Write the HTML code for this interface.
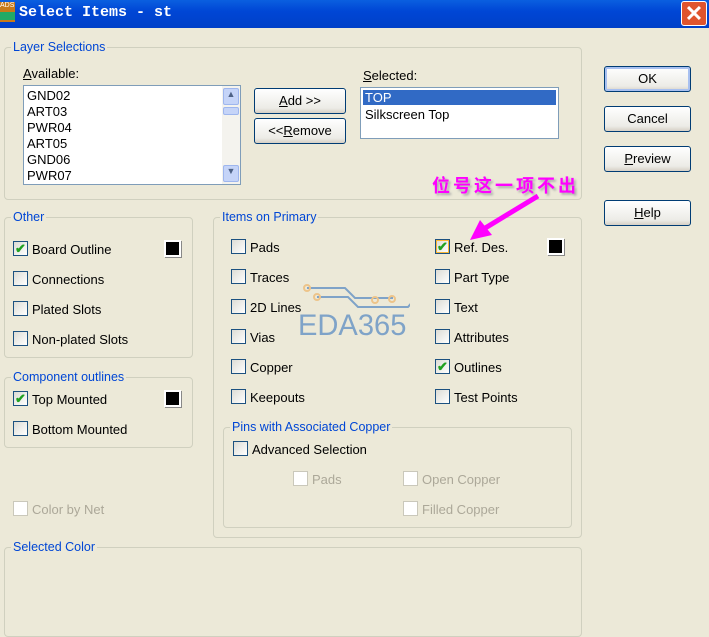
<!DOCTYPE html>
<html><head><meta charset="utf-8"><style>
*{box-sizing:border-box;margin:0;padding:0}
body{width:709px;height:623px;overflow:hidden;background:#ECE9D8;font-family:"Liberation Sans",sans-serif;font-size:13px;color:#000;position:relative}
.a{position:absolute}
.title{left:0;top:0;width:709px;height:28px;background:linear-gradient(#0A5FE0,#0046D5 40%,#0040C8);}
.tt{left:19px;top:4px;color:#fff;font-family:"Liberation Mono",monospace;font-weight:bold;font-size:15px}
.grp{position:absolute;border:1px solid #D0D0BF;border-radius:4px}
.gl{position:absolute;background:#ECE9D8;color:#0046D5;padding:0 2px;top:-8px;left:6px;font-size:12.5px;line-height:14px}
.cb{position:absolute;width:15px;height:15px;border:1px solid #1C5180;background:linear-gradient(135deg,#DCDCD5,#fff)}
.cb.d{border-color:#CAC8BB;background:#fff}
.lab{position:absolute;font-size:13px;line-height:15px}
.btn{position:absolute;border:1px solid #003C74;border-radius:3px;background:linear-gradient(#fff,#ECEBE6 80%,#D6D0C5);text-align:center;line-height:23px;font-size:13px}
.lb{position:absolute;background:#fff;border:1px solid #7F9DB9}
.sw{position:absolute;width:17px;height:17px;background:#000;border:2px solid #fff;box-shadow:1px 1px 0 #888}
.ck{position:absolute;left:1px;top:0;color:#21A121;font-size:13px;font-weight:bold;line-height:14px}
</style></head><body>
<div class="a title"></div>
<div class="a" style="left:0;top:2px;width:15px;height:20px;background:#C77A1A;font-size:7px;color:#fff;line-height:8px">ADS<div style="background:#2a6;height:8px;margin-top:2px"></div></div>
<div class="a tt">Select Items - st</div>
<div class="a" style="left:681px;top:1px;width:26px;height:25px;background:#E0542E;border:1px solid #fff;border-radius:3px;color:#fff;font-size:22px;font-weight:bold;text-align:center;line-height:24px">✕</div>

<div class="grp" style="left:4px;top:47px;width:578px;height:153px"><span class="gl">Layer Selections</span></div>
<div class="lab" style="left:23px;top:66px"><u>A</u>vailable:</div>
<div class="lb" style="left:23px;top:85px;width:218px;height:100px">
<div style="position:absolute;left:3px;top:2px;line-height:16px">GND02<br>ART03<br>PWR04<br>ART05<br>GND06<br>PWR07</div>
<div style="position:absolute;right:0;top:0;width:18px;height:98px;background:#F4F3EE">
<div style="height:17px;margin:2px 1px;background:#C5D4F8;border:1px solid #9EB6EE;border-radius:2px;text-align:center;font-size:9px;color:#4D6185">▲</div>
<div style="height:8px;margin:0 1px;background:#C5D4F8;border:1px solid #9EB6EE;border-radius:2px"></div>
<div style="position:absolute;bottom:2px;left:1px;width:16px;height:17px;background:#C5D4F8;border:1px solid #9EB6EE;border-radius:2px;text-align:center;font-size:9px;color:#4D6185">▼</div></div></div>
<div class="btn" style="left:254px;top:88px;width:92px;height:26px"><u>A</u>dd &gt;&gt;</div>
<div class="btn" style="left:254px;top:118px;width:92px;height:26px">&lt;&lt;<u>R</u>emove</div>
<div class="lab" style="left:363px;top:68px"><u>S</u>elected:</div>
<div class="lb" style="left:360px;top:87px;width:199px;height:52px">
<div style="margin:2px;background:#316AC5;color:#fff;line-height:15px;padding-left:2px">TOP</div>
<div style="padding-left:4px;line-height:15px">Silkscreen Top</div></div>

<div class="btn" style="left:604px;top:66px;width:87px;height:26px;box-shadow:inset 0 0 0 2px #A8C0F0">OK</div>
<div class="btn" style="left:604px;top:106px;width:87px;height:26px">Cancel</div>
<div class="btn" style="left:604px;top:146px;width:87px;height:26px"><u>P</u>review</div>
<div class="btn" style="left:604px;top:200px;width:87px;height:26px"><u>H</u>elp</div>

<div class="grp" style="left:4px;top:217px;width:189px;height:141px"><span class="gl">Other</span></div>
<div class="cb" style="left:13px;top:241px"><span class="ck">✔</span></div><div class="lab" style="left:32px;top:242px">Board Outline</div>
<div class="sw" style="left:164px;top:240px"></div>
<div class="cb" style="left:13px;top:271px"></div><div class="lab" style="left:32px;top:272px">Connections</div>
<div class="cb" style="left:13px;top:301px"></div><div class="lab" style="left:32px;top:302px">Plated Slots</div>
<div class="cb" style="left:13px;top:331px"></div><div class="lab" style="left:32px;top:332px">Non-plated Slots</div>

<div class="grp" style="left:4px;top:377px;width:189px;height:71px"><span class="gl">Component outlines</span></div>
<div class="cb" style="left:13px;top:391px"><span class="ck">✔</span></div><div class="lab" style="left:32px;top:392px">Top Mounted</div>
<div class="sw" style="left:164px;top:390px"></div>
<div class="cb" style="left:13px;top:421px"></div><div class="lab" style="left:32px;top:422px">Bottom Mounted</div>

<div class="cb d" style="left:13px;top:501px"></div><div class="lab" style="left:32px;top:502px;color:#ACA899">Color by Net</div>

<div class="grp" style="left:213px;top:217px;width:369px;height:321px"><span class="gl">Items on Primary</span></div>
<div class="cb" style="left:231px;top:239px"></div><div class="lab" style="left:250px;top:240px">Pads</div>
<div class="cb" style="left:231px;top:269px"></div><div class="lab" style="left:250px;top:270px">Traces</div>
<div class="cb" style="left:231px;top:299px"></div><div class="lab" style="left:250px;top:300px">2D Lines</div>
<div class="cb" style="left:231px;top:329px"></div><div class="lab" style="left:250px;top:330px">Vias</div>
<div class="cb" style="left:231px;top:359px"></div><div class="lab" style="left:250px;top:360px">Copper</div>
<div class="cb" style="left:231px;top:389px"></div><div class="lab" style="left:250px;top:390px">Keepouts</div>
<div class="cb" style="left:435px;top:239px;border-color:#1C5180;box-shadow:inset 0 0 0 1px #F8B636"><span class="ck">✔</span></div><div class="lab" style="left:454px;top:240px">Ref. Des.</div>
<div class="sw" style="left:547px;top:238px"></div>
<div class="cb" style="left:435px;top:269px"></div><div class="lab" style="left:454px;top:270px">Part Type</div>
<div class="cb" style="left:435px;top:299px"></div><div class="lab" style="left:454px;top:300px">Text</div>
<div class="cb" style="left:435px;top:329px"></div><div class="lab" style="left:454px;top:330px">Attributes</div>
<div class="cb" style="left:435px;top:359px"><span class="ck">✔</span></div><div class="lab" style="left:454px;top:360px">Outlines</div>
<div class="cb" style="left:435px;top:389px"></div><div class="lab" style="left:454px;top:390px">Test Points</div>

<svg class="a" style="left:300px;top:282px" width="110" height="40"><g fill="none" stroke-width="2"><path d="M7 6H45L55 16H93" stroke="#7FA3C8"/><path d="M17 15H48L58 25H108L114 18" stroke="#7FA3C8"/><g stroke="#EDC48A"><circle cx="7" cy="6" r="3"/><circle cx="17" cy="15" r="3"/><circle cx="75" cy="18" r="3"/><circle cx="92" cy="17" r="3"/></g></g></svg>
<div class="a" style="left:298px;top:309px;font-size:30px;color:#7FA3C8;transform:scaleX(0.97);transform-origin:left">EDA365</div>

<div class="a" style="left:432px;top:172px;color:#FF00FF;font-family:'Liberation Sans','Noto Sans CJK SC',sans-serif;font-size:18px;font-weight:bold;letter-spacing:3px;text-shadow:2px 2px 2px #aaa">位号这一项不出</div>
<svg class="a" style="left:460px;top:190px" width="90" height="60"><path d="M78 6L22 40" stroke="#FF00FF" stroke-width="5"/><path d="M10 50L20 30L32 45Z" fill="#FF00FF"/></svg>

<div class="grp" style="left:223px;top:427px;width:349px;height:101px"><span class="gl">Pins with Associated Copper</span></div>
<div class="cb" style="left:233px;top:441px"></div><div class="lab" style="left:252px;top:442px">Advanced Selection</div>
<div class="cb d" style="left:293px;top:471px"></div><div class="lab" style="left:312px;top:472px;color:#ACA899">Pads</div>
<div class="cb d" style="left:403px;top:471px"></div><div class="lab" style="left:422px;top:472px;color:#ACA899">Open Copper</div>
<div class="cb d" style="left:403px;top:501px"></div><div class="lab" style="left:422px;top:502px;color:#ACA899">Filled Copper</div>

<div class="grp" style="left:4px;top:547px;width:578px;height:90px"><span class="gl">Selected Color</span></div>
</body></html>
